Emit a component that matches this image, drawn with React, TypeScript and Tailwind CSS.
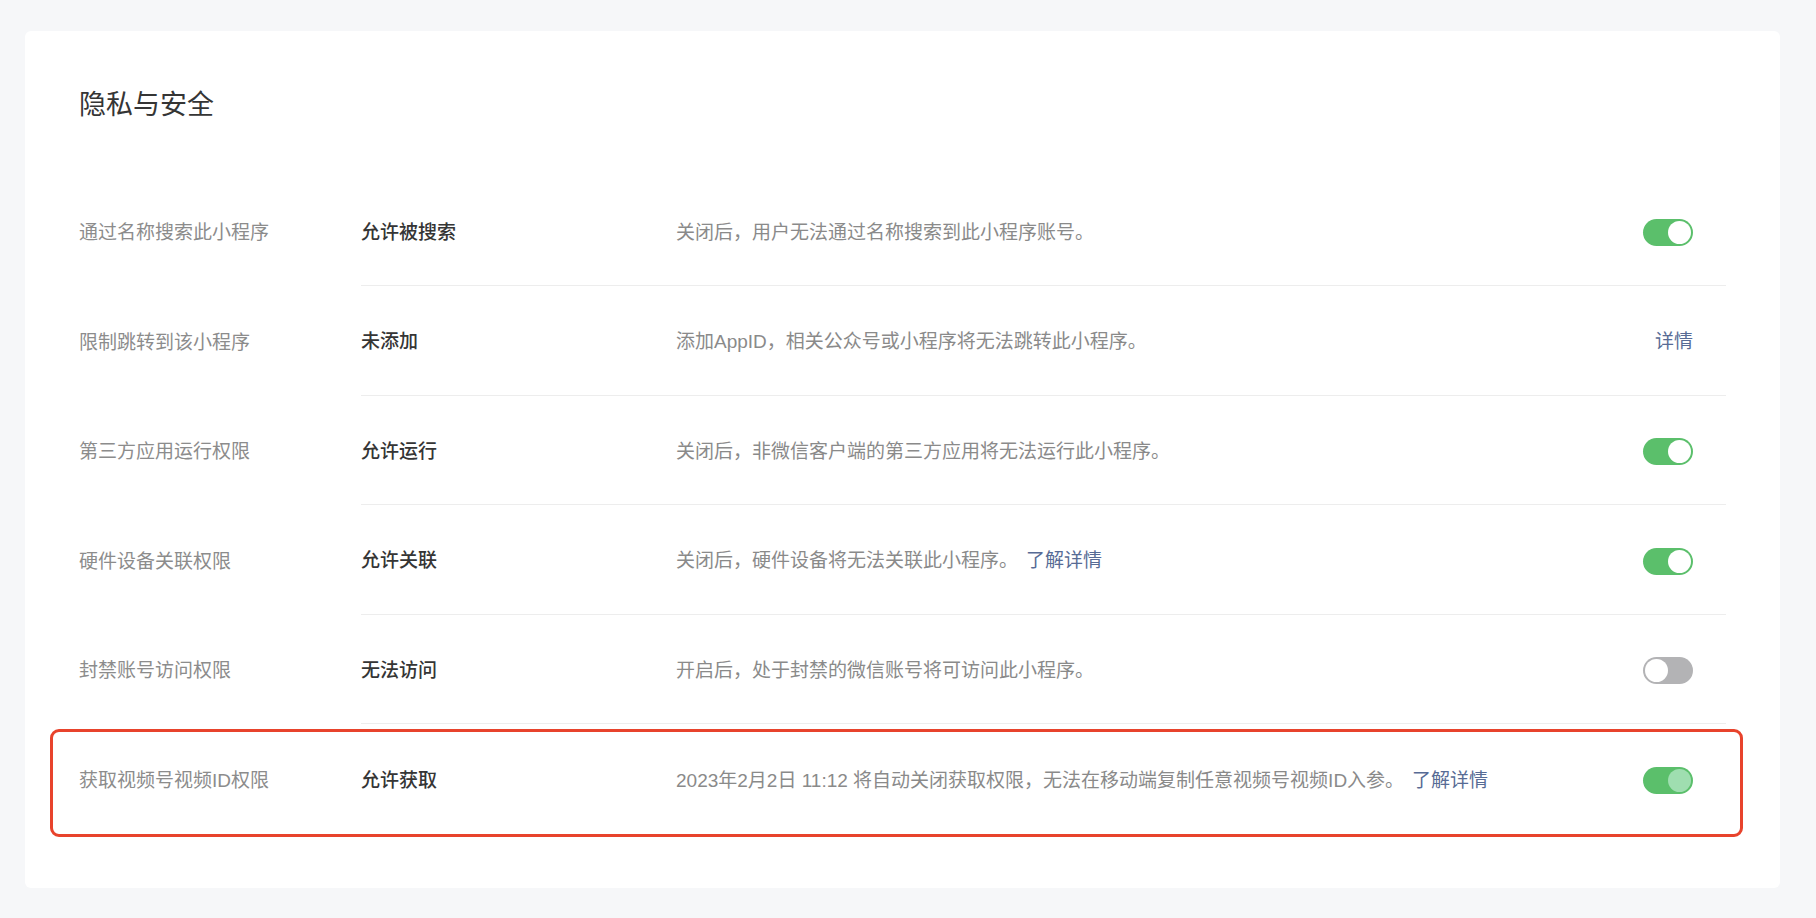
import React from "react";

type Action = { kind: "on" } | { kind: "off" } | { kind: "on-disabled" } | { kind: "link"; text: string };

type Row = {
  label: string;
  value: string;
  desc: string;
  link?: string;
  action: Action;
  highlight?: boolean;
};

const rows: Row[] = [
  {
    label: "通过名称搜索此小程序",
    value: "允许被搜索",
    desc: "关闭后，用户无法通过名称搜索到此小程序账号。",
    action: { kind: "on" },
  },
  {
    label: "限制跳转到该小程序",
    value: "未添加",
    desc: "添加AppID，相关公众号或小程序将无法跳转此小程序。",
    action: { kind: "link", text: "详情" },
  },
  {
    label: "第三方应用运行权限",
    value: "允许运行",
    desc: "关闭后，非微信客户端的第三方应用将无法运行此小程序。",
    action: { kind: "on" },
  },
  {
    label: "硬件设备关联权限",
    value: "允许关联",
    desc: "关闭后，硬件设备将无法关联此小程序。",
    link: "了解详情",
    action: { kind: "on" },
  },
  {
    label: "封禁账号访问权限",
    value: "无法访问",
    desc: "开启后，处于封禁的微信账号将可访问此小程序。",
    action: { kind: "off" },
  },
  {
    label: "获取视频号视频ID权限",
    value: "允许获取",
    desc: "2023年2月2日 11:12 将自动关闭获取权限，无法在移动端复制任意视频号视频ID入参。",
    link: "了解详情",
    action: { kind: "on-disabled" },
    highlight: true,
  },
];

function Toggle({ state }: { state: "on" | "off" | "on-disabled" }) {
  if (state === "off") {
    return (
      <div className="relative w-[50px] h-[27px] rounded-full bg-[#b3b3b5]">
        <div className="absolute top-[2px] left-[2px] w-[23px] h-[23px] rounded-full bg-white" />
      </div>
    );
  }
  return (
    <div className="relative w-[50px] h-[27px] rounded-full bg-[#5bbf6b]">
      <div
        className={
          state === "on"
            ? "absolute top-[2px] right-[2px] w-[23px] h-[23px] rounded-full bg-white"
            : "absolute top-[2px] right-[2px] w-[23px] h-[23px] rounded-full bg-[#9fdeb0]"
        }
      />
    </div>
  );
}

export default function App() {
  return (
    <div
      className="min-h-screen w-full bg-[#f6f7f9] pt-[31px] pl-[25px] pr-[36px] pb-[30px]"
      style={{ fontFamily: '"Helvetica Neue", "Liberation Sans", "Noto Sans CJK SC", sans-serif' }}
    >
      <div className="bg-white rounded-[6px] px-[54px] pt-[55px] pb-[54px]">
        <h1 className="text-[27px] leading-[38px] text-[#353535] font-normal">隐私与安全</h1>
        <div className="mt-[52.5px]">
          {rows.map((row, i) => {
            const last = i === rows.length - 1;
            return (
              <div key={row.label} className="relative flex h-[109.5px]">
                {row.highlight && (
                  <div className="pointer-events-none absolute top-[5px] bottom-[-3px] left-[-29px] right-[-17px] rounded-[9px] border-[3.5px] border-[#e8432c]" />
                )}
                <div className="w-[282px] shrink-0 flex items-center pt-[4px] text-[19px] text-[#8c8c8c]">
                  {row.label}
                </div>
                <div
                  className={
                    last
                      ? "flex-1 flex items-center pt-[4px] pr-[33px]"
                      : "flex-1 flex items-center pt-[4px] pr-[33px] border-b border-[#ededed]"
                  }
                >
                  <div className="w-[315px] shrink-0 text-[19px] text-[#353535] font-medium">{row.value}</div>
                  <div className="flex-1 text-[19px] text-[#8a8a8a]">
                    {row.desc}
                    {row.link && <span className="ml-[8px] text-[#576b95]">{row.link}</span>}
                  </div>
                  <div className="shrink-0 flex items-center">
                    {row.action.kind === "link" ? (
                      <span className="text-[19px] text-[#576b95]">{row.action.text}</span>
                    ) : (
                      <Toggle state={row.action.kind} />
                    )}
                  </div>
                </div>
              </div>
            );
          })}
        </div>
      </div>
    </div>
  );
}
